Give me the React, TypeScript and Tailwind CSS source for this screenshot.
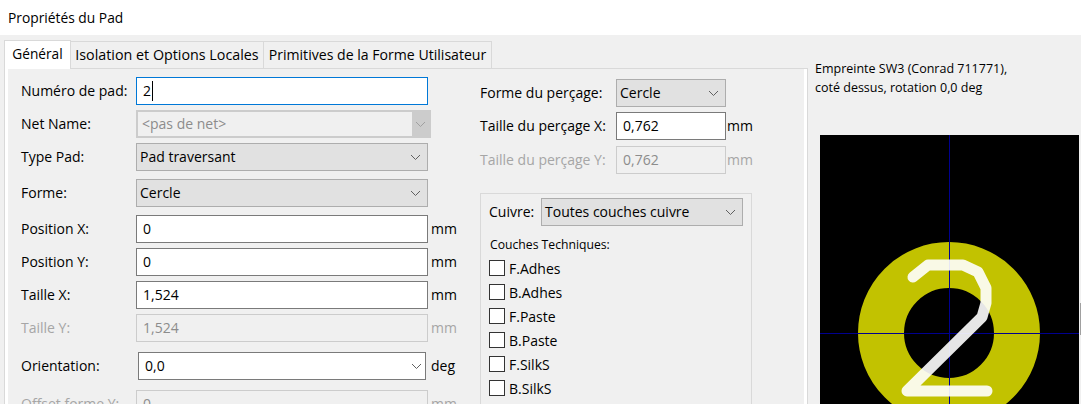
const font = { fontFamily: '"Open Sans", "Noto Sans", sans-serif' };

function Chevron({ color = "#606060" }: { color?: string }) {
  return (
    <svg width="11" height="7" viewBox="0 0 11 7" className="shrink-0">
      <polyline points="1,1 5.5,5.5 10,1" fill="none" stroke={color} strokeWidth="1" />
    </svg>
  );
}

function Input({ value, width = "w-[292px]", disabled = false }: { value: string; width?: string; disabled?: boolean }) {
  return (
    <div
      className={`flex h-[28px] shrink-0 items-center border pl-[6px] ${width} ${
        disabled ? "border-[#cccccc] bg-[#f0f0f0] text-[#8c8c8c]" : "border-[#7a7a7a] bg-white text-black"
      }`}
    >
      {value}
    </div>
  );
}

function Combo({ value, width = "w-[292px]" }: { value: string; width?: string }) {
  return (
    <div className={`flex h-[28px] shrink-0 items-center justify-between border border-[#adadad] bg-[#e1e1e1] pl-[3px] pr-[6px] ${width}`}>
      <span>{value}</span>
      <Chevron />
    </div>
  );
}

function Row({ label, disabled = false, unit, className = "mt-[5px]", labelWidth = "w-[115px]", unitGap = "ml-[3px]", children }: {
  label: string;
  disabled?: boolean;
  unit?: string;
  className?: string;
  labelWidth?: string;
  unitGap?: string;
  children: React.ReactNode;
}) {
  return (
    <div className={`flex items-center ${className}`}>
      <div className={`shrink-0 ${labelWidth} ${disabled ? "text-[#a6a6a6]" : "text-black"}`}>{label}</div>
      {children}
      {unit && <div className={`${unitGap} ${disabled ? "text-[#a6a6a6]" : "text-black"}`}>{unit}</div>}
    </div>
  );
}

const layers = ["F.Adhes", "B.Adhes", "F.Paste", "B.Paste", "F.SilkS", "B.SilkS"];

function PadPreview() {
  return (
    <svg width="259" height="269" viewBox="0 0 259 269" className="block">
      <rect width="259" height="269" fill="#000000" />
      <circle cx="129" cy="198" r="68" fill="none" stroke="#c2c200" strokeWidth="46" />
      <rect x="129" y="0" width="1" height="269" fill="#000090" />
      <rect x="0" y="198" width="259" height="1" fill="#000090" />
      <polyline
        points="93,142 108,130 143,130 158,137 166,153 166,168 162,182 87,256 167,256"
        fill="none"
        stroke="#ffffff"
        strokeOpacity="0.9"
        strokeWidth="11"
        strokeLinecap="round"
        strokeLinejoin="round"
      />
    </svg>
  );
}

export default function App() {
  return (
    <div className="relative h-[404px] w-[1081px] overflow-hidden bg-[#f0f0f0] text-[14px] leading-[20px] text-black" style={font}>
      <div className="flex h-[35px] items-center bg-white pl-[8px] text-[13.8px]">Propriétés du Pad</div>
      <div className="flex">
        <div className="w-[808px] shrink-0 pl-[4px]">
          <div className="flex items-end pt-[5px]">
            <div className="relative z-10 -mb-px flex h-[29px] w-[67px] items-center justify-center border border-b-0 border-[#d9d9d9] bg-white pb-[3px] text-[13.7px]">Général</div>
            <div className="flex h-[27px] w-[193px] items-center justify-center border-t border-r border-[#d9d9d9] text-[14.3px]">Isolation et Options Locales</div>
            <div className="flex h-[27px] w-[228px] items-center justify-center border-t border-r border-[#d9d9d9] text-[14.1px]">Primitives de la Forme Utilisateur</div>
          </div>
          <div className="h-[340px] overflow-hidden border border-[#d9d9d9] bg-white px-[3px]">
            <div className="flex h-full bg-[#f0f0f0]">
              <div className="w-[472px] shrink-0 pl-[13px] pt-[8px]">
                <Row label="Numéro de pad:" className="">
                  <div className="flex h-[28px] w-[292px] items-center border border-[#0078d7] bg-white pl-[6px]">
                    2<span className="ml-px h-[20px] w-px bg-black" />
                  </div>
                </Row>
                <Row label="Net Name:">
                  <div className="flex h-[28px] w-[295px] items-stretch border-2 border-[#cccccc] bg-[#f0f0f0]">
                    <div className="flex flex-1 items-center pl-[4px] text-[#8c8c8c]">&lt;pas de net&gt;</div>
                    <div className="flex w-[17px] items-center justify-center bg-[#cccccc]">
                      <Chevron color="#a0a0a0" />
                    </div>
                  </div>
                </Row>
                <Row label="Type Pad:"><Combo value="Pad traversant" /></Row>
                <Row label="Forme:" className="mt-[8px]"><Combo value="Cercle" /></Row>
                <Row label="Position X:" unit="mm" className="mt-[8px]"><Input value="0" /></Row>
                <Row label="Position Y:" unit="mm"><Input value="0" /></Row>
                <Row label="Taille X:" unit="mm"><Input value="1,524" /></Row>
                <Row label="Taille Y:" unit="mm" disabled><Input value="1,524" disabled /></Row>
                <Row label="Orientation:" unit="deg" className="mt-[10px]" labelWidth="w-[117px]" unitGap="ml-[5px]">
                  <div className="flex h-[28px] w-[288px] shrink-0 items-center justify-between border border-[#7a7a7a] bg-white pl-[6px] pr-[3px]">
                    <span>0,0</span>
                    <Chevron />
                  </div>
                </Row>
                <Row label="Offset forme Y:" unit="mm" disabled className="mt-[10px]"><Input value="0" disabled /></Row>
              </div>
              <div className="pt-[10px]">
                <Row label="Forme du perçage:" className="" labelWidth="w-[136px]">
                  <Combo value="Cercle" width="w-[110px]" />
                </Row>
                <Row label="Taille du perçage X:" unit="mm" labelWidth="w-[136px]" unitGap="ml-px">
                  <Input value="0,762" width="w-[110px]" />
                </Row>
                <Row label="Taille du perçage Y:" unit="mm" disabled className="mt-[6px]" labelWidth="w-[136px]" unitGap="ml-px">
                  <Input value="0,762" width="w-[110px]" disabled />
                </Row>
                <div className="mt-[19px] w-[272px] border border-[#d9d9d9] pb-[24px] pl-[8px] pt-[4px]">
                  <Row label="Cuivre:" className="" labelWidth="w-[52px]">
                    <Combo value="Toutes couches cuivre" width="w-[202px]" />
                  </Row>
                  <div className="mt-[10px] pl-px text-[12.2px] leading-[18px]">Couches Techniques:</div>
                  <div className="mt-[6px] flex flex-col gap-[8px]">
                    {layers.map((layer) => (
                      <div key={layer} className="flex h-[16px] items-center gap-[4px]">
                        <div className="h-[16px] w-[16px] border border-[#333333] bg-white" />
                        <span className="pt-px">{layer}</span>
                      </div>
                    ))}
                  </div>
                </div>
              </div>
            </div>
          </div>
        </div>
        <div className="pt-[24px]">
          <div className="pl-[7px] text-[12.5px] leading-[19px]">
            Empreinte SW3 (Conrad 711771),
            <br />
            coté dessus, rotation 0,0 deg
          </div>
          <div className="mt-[38px] pl-[12px]">
            <PadPreview />
          </div>
        </div>
      </div>
      <div className="absolute left-[1080px] top-[303px] h-[32px] w-px bg-[#a0a0a0]" />
    </div>
  );
}
